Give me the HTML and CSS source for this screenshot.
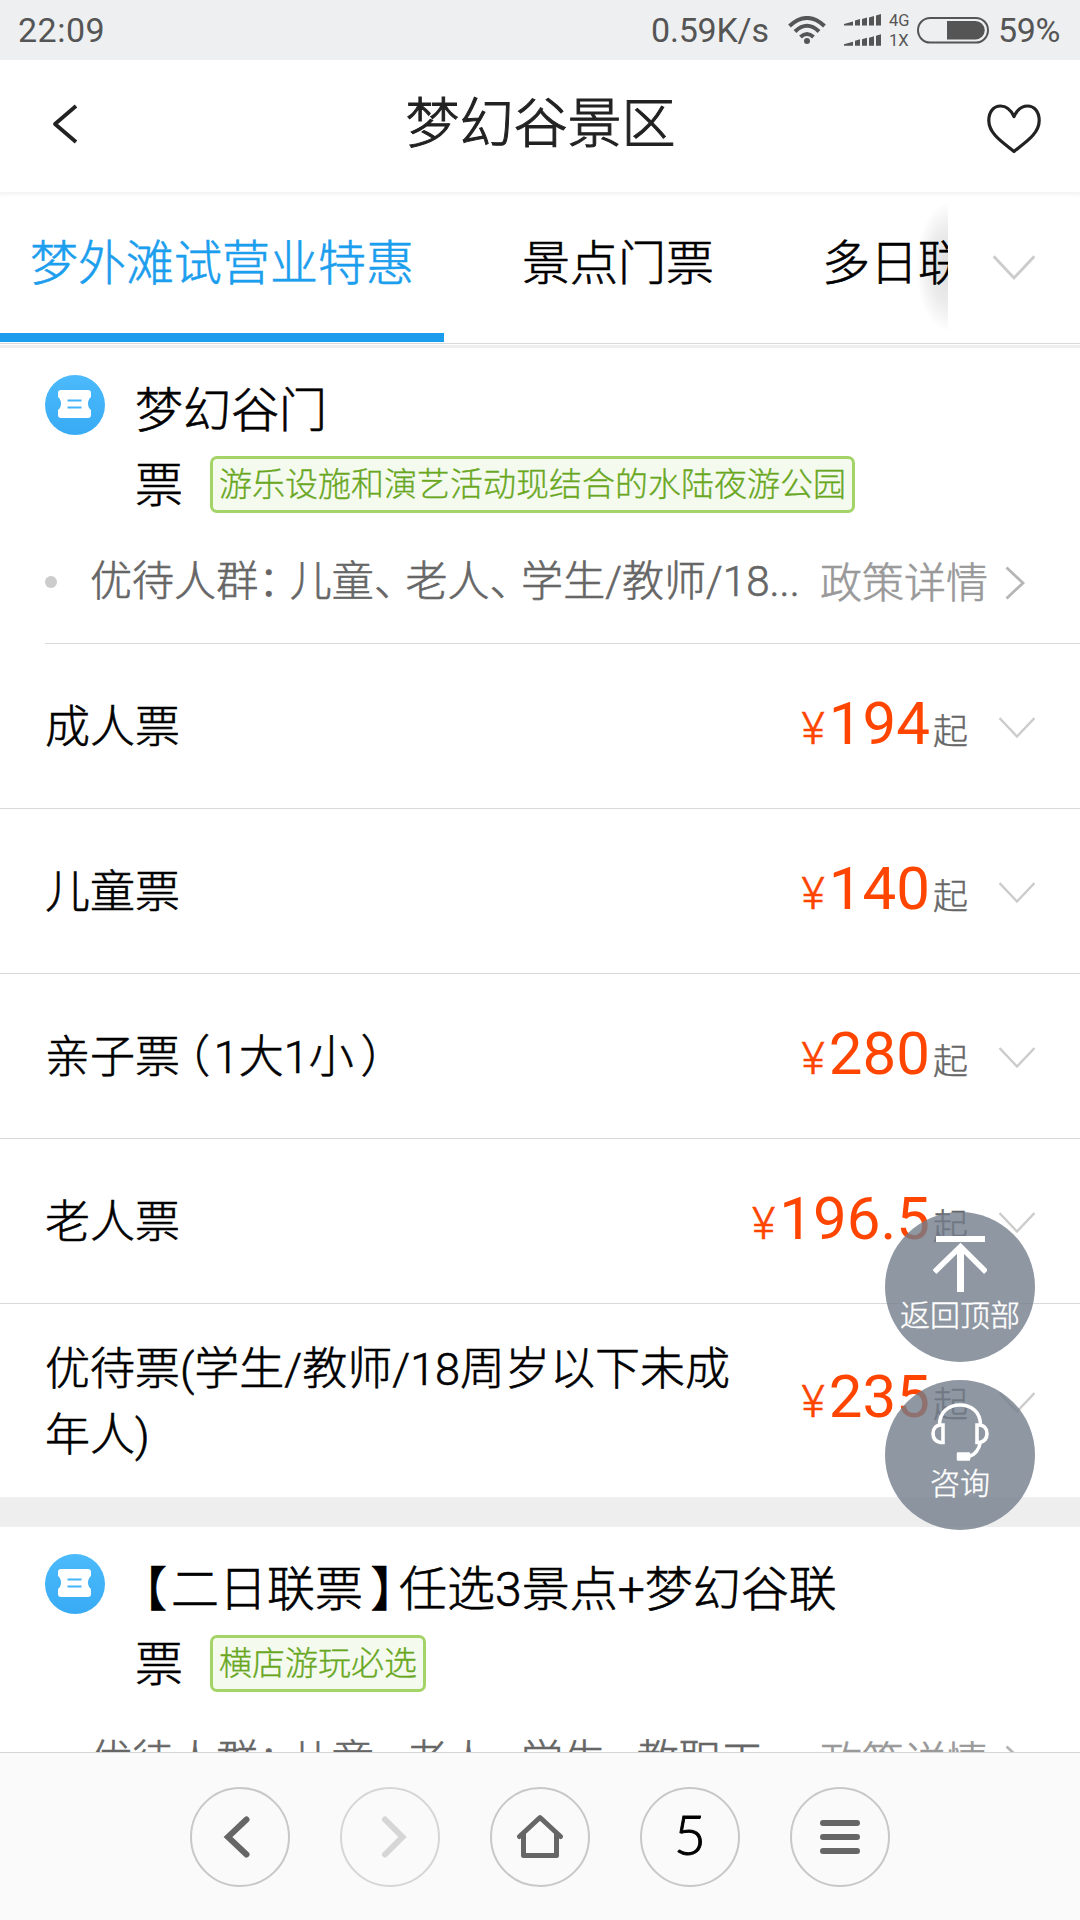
FILE: index.html
```html
<!DOCTYPE html>
<html lang="zh-CN">
<head>
<meta charset="utf-8">
<title>梦幻谷景区</title>
<link rel="stylesheet" href="styles.css">
</head>
<body>
<svg class="defs" width="0" height="0">
  <defs>
    <linearGradient id="sky" x1="0" y1="0" x2="0" y2="1">
      <stop offset="0" stop-color="#4cbafb"/><stop offset="1" stop-color="#38abf5"/>
    </linearGradient>
    <symbol id="ticket" viewBox="0 0 60 60">
      <circle cx="30" cy="30" r="30" fill="url(#sky)"/>
      <path d="M16 15h27q3 0 3 3v4q-3 2.500-3 6.500t3 6.500v5q0 3-3 3H16q-3 0-3-3v-5q3-2.500 3-6.500T13 22v-4q0-3 3-3z" fill="#fff"/>
      <path d="M22.500 25.500h14M22.500 32.500h14" stroke="#45b4f9" stroke-width="2.200"/>
    </symbol>
    <symbol id="down" viewBox="0 0 36 22">
      <path d="M0.500 1L18 19.500L35.500 1" fill="none" stroke="#ccc" stroke-width="2.500"/>
    </symbol>
    <symbol id="more" viewBox="0 0 20 34">
      <path d="M1.500 1.500L18 17L1.500 32.500" fill="none" stroke="#b5b5b5" stroke-width="2.800"/>
    </symbol>
  </defs>
</svg>
<div class="screen">
  <div class="status">
    <span class="time">22:09</span>
    <span class="speed">0.59K/s</span>
    <svg class="wifi" width="38" height="28" viewBox="0 0 38 28" fill="none" stroke="#555" stroke-width="4">
      <path d="M1.500 10Q19-6 36.500 10"/><path d="M7 15.500Q19 4 31 15.500"/><path d="M12.500 21Q19 15 25.500 21"/>
      <circle cx="19" cy="25" r="3" fill="#555" stroke="none"/>
    </svg>
    <svg class="signal" width="38" height="32" viewBox="0 0 38 32" fill="#555">
      <path id="bars" d="M0 11.500V10L9 7.500V11.500zM11 11.500V6.500L16 5V11.500zM18 11.500V5L23 3.500V11.500zM25 11.500V3.500L30 2V11.500zM32 11.500V1.500L37 0V11.500z"/>
      <use href="#bars" y="20.300"/>
    </svg>
    <span class="net"><span>4G</span><span>1X</span></span>
    <svg class="battery" width="72" height="28" viewBox="0 0 72 28">
      <rect x="1" y="2" width="70" height="24.500" rx="12.200" fill="none" stroke="#555" stroke-width="2"/>
      <path d="M30 5H58.500a9.200 9.200 0 0 1 0 18.400H30z" fill="#555"/>
    </svg>
    <span class="percent">59%</span>
  </div>

  <header class="header">
    <svg width="26" height="40" viewBox="0 0 26 40"><path d="M24 2L3 20L24 38" fill="none" stroke="#222" stroke-width="3.800" stroke-linejoin="round"/></svg>
    <h1>梦幻谷景区</h1>
    <svg class="heart" width="54" height="50" viewBox="0 0 54 50"><path d="M27 12.500C23.500 5 18.500 2 13.500 2C6.500 2 1.800 8 1.800 16.500C1.800 30 16 38.500 27 47.500C38 38.500 52.200 30 52.200 16.500C52.200 8 47.500 2 40.500 2C35.500 2 30.500 5 27 12.500z" fill="none" stroke="#222" stroke-width="3.200" stroke-linejoin="round"/></svg>
  </header>

  <nav class="tabs">
    <div class="tab-strip">
      <span class="tab active">梦外滩试营业特惠</span>
      <span class="tab">景点门票</span>
      <span class="tab">多日联票</span>
    </div>
    <div class="tab-more"><svg width="42" height="26"><use href="#down"/></svg></div>
  </nav>

  <main class="content">
    <section class="group">
      <div class="group-head">
        <svg class="ticket" width="60" height="60"><use href="#ticket"/></svg>
        <h2>梦幻谷门<br>票<span class="badge">游乐设施和演艺活动现结合的水陆夜游公园</span></h2>
      </div>
      <div class="policy">
        <i class="dot"></i>
        <span class="who">优待人群<b class="stop">：</b>儿童<b class="stop">、</b>老人<b class="stop">、</b>学生/教师/18...</span>
        <span class="detail">政策详情</span>
        <svg class="more" width="20" height="34"><use href="#more"/></svg>
      </div>
      <ul class="list">
        <li><span class="name">成人票</span><span class="price"><small>¥</small>194<em>起</em></span><svg width="36" height="22"><use href="#down"/></svg></li>
        <li><span class="name">儿童票</span><span class="price"><small>¥</small>140<em>起</em></span><svg width="36" height="22"><use href="#down"/></svg></li>
        <li><span class="name">亲子票<b class="open">（</b>1大1小<b class="close">）</b></span><span class="price"><small>¥</small>280<em>起</em></span><svg width="36" height="22"><use href="#down"/></svg></li>
        <li><span class="name">老人票</span><span class="price"><small>¥</small>196.5<em>起</em></span><svg width="36" height="22"><use href="#down"/></svg></li>
        <li class="tall"><span class="name">优待票(学生/教师/18周岁以下未成<br>年人)</span><span class="price"><small>¥</small>235<em>起</em></span><svg width="36" height="22"><use href="#down"/></svg></li>
      </ul>
    </section>
    <section class="group next">
      <div class="group-head">
        <svg class="ticket" width="60" height="60"><use href="#ticket"/></svg>
        <h2><b class="open">【</b>二日联票<b class="close">】</b>任选3景点+梦幻谷联<br>票<span class="badge">横店游玩必选</span></h2>
      </div>
      <div class="policy">
        <i class="dot"></i>
        <span class="who">优待人群<b class="stop">：</b>儿童<b class="stop">、</b>老人<b class="stop">、</b>学生<b class="stop">、</b>教职工</span>
        <span class="detail">政策详情</span>
        <svg class="more" width="20" height="34"><use href="#more"/></svg>
      </div>
    </section>
  </main>

  <footer class="toolbar">
    <span class="btn"><svg width="40" height="44" viewBox="0 0 40 44"><path d="M26.500 4.500L8 22L26.500 39.500" fill="none" stroke="#666" stroke-width="6" stroke-linecap="round"/></svg></span>
    <span class="btn off"><svg width="40" height="44" viewBox="0 0 40 44"><path d="M15 4.500L32.500 22L15 39.500" fill="none" stroke="#d6d6d6" stroke-width="6" stroke-linecap="round"/></svg></span>
    <span class="btn"><svg width="48" height="46" viewBox="0 0 48 46"><path d="M3.500 22.500L24 3.500L44.500 22.500M7.500 20V41.500H40.500V20" fill="none" stroke="#666" stroke-width="5" stroke-linecap="round" stroke-linejoin="round"/></svg></span>
    <span class="btn num">5</span>
    <span class="btn"><svg width="40" height="36" viewBox="0 0 40 36"><path d="M3 4H37M3 18H37M3 32H37" stroke="#666" stroke-width="6" stroke-linecap="round"/></svg></span>
  </footer>

  <div class="floats">
    <div class="fab">
      <svg width="54" height="58" viewBox="0 0 54 58" fill="none" stroke="#fff"><path d="M3 4H52" stroke-width="6"/><path d="M27.500 57V11" stroke-width="7"/><path d="M1.500 37L27.500 11.500L53 37" stroke-width="5.500"/></svg>
      <span>返回顶部</span>
    </div>
    <div class="fab">
      <svg width="58" height="58" viewBox="0 0 58 58" fill="none" stroke="#fff" stroke-width="3.600"><path d="M8.500 22C8.500 9.500 17 2 29 2S49.500 9.500 49.500 22"/><path d="M12 22V39.500H9.500Q2 38 2 30.500T9.500 22z"/><path d="M46 22V39.500H48.500Q56 38 56 30.500T48.500 22z"/><path d="M49.500 39Q47 51 38 53.500"/><rect x="27" y="50.500" width="11" height="6" fill="#fff" stroke-width="2.500" stroke-linejoin="round"/></svg>
      <span>咨询</span>
    </div>
  </div>
</div>
</body>
</html>
```

FILE: styles.css
```css
* { box-sizing: border-box; margin: 0; padding: 0; }
body { width: 1080px; height: 1920px; overflow: hidden; background: #fff; font-family: Roboto, "Noto Sans CJK SC", sans-serif; color: #000; }
svg { display: block; flex: none; }
.defs { position: absolute; }
h1, h2, b { font-weight: inherit; }
em, i { font-style: normal; }
.screen { position: relative; width: 1080px; height: 1920px; display: flex; flex-direction: column; overflow: hidden; }

.status { flex: none; height: 60px; background: #eeeff1; color: #555; font-size: 34px; line-height: 60px; display: flex; align-items: center; padding: 0 18px; white-space: nowrap; }
.time { margin-right: auto; letter-spacing: 0.500px; }
.speed { width: 120px; letter-spacing: -0.200px; }
.wifi { margin-left: 17px; }
.signal { margin-left: 18px; }
.net { display: flex; flex-direction: column; width: 28px; margin-left: 7px; font-size: 16.500px; line-height: 20px; padding-top: 1px; }
.percent { margin-left: 9px; width: 64px; letter-spacing: -0.300px; }

.header, .tab, .group-head, .policy, .name, .fab { font-weight: 300; -webkit-text-stroke: 0.600px currentColor; }
.header { flex: none; height: 132px; display: flex; align-items: center; justify-content: space-between; padding: 0 39px 4px 52px; }
.header h1 { font-size: 54px; line-height: 66px; color: #222; font-weight: 300; margin: 2px 0 0 16px; -webkit-text-stroke-width: 1px; }
.heart { margin-top: 9px; }

.tabs { flex: none; height: 152px; display: flex; border-bottom: 1px solid #d9d9d9; box-shadow: inset 0 5px 5px -3px #f0f0f0; }
.tab-strip { width: 948px; display: flex; gap: 48px; overflow: hidden; }
.tab { flex: none; padding: 38px 30px 0; height: 150px; font-size: 48px; line-height: 68px; white-space: nowrap; }
.tab.active { color: #1c9eee; border-bottom: 9px solid #1b9dee; }
.tab-more { position: relative; width: 132px; padding: 63px 0 0 45px; }
.tab-more::before { content: ""; position: absolute; right: 100%; top: 10px; width: 32px; height: 130px; background: radial-gradient(ellipse 100% 50% at 100% 50%, rgba(0,0,0,.13), rgba(0,0,0,.08) 55%, transparent); }

.content { flex: 1; min-height: 0; overflow: hidden; padding-top: 1px; }
.group { border-top: 3px solid #eee; }
.group.next { border-top-width: 30px; }
.group-head { display: flex; padding: 25px 0 0 45px; height: 176px; }
.ticket { margin-top: 2px; }
.group-head h2 { margin-left: 30px; font-size: 48px; line-height: 75px; white-space: nowrap; }
.badge { position: relative; top: -5px; display: inline-block; height: 57px; margin: -20px 0 -20px 27px; padding: 0 6px; border: 3px solid #a4d467; border-radius: 7px; background: #f4faee; color: #69a71f; font-size: 33px; line-height: 51px; vertical-align: middle; -webkit-text-stroke-width: 0.300px; }
.policy { display: flex; align-items: center; height: 120px; margin-left: 45px; border-bottom: 1px solid #d9d9d9; font-size: 42px; line-height: 60px; color: #666; white-space: nowrap; }
.dot { width: 12px; height: 12px; border-radius: 50%; background: #ccc; margin-top: -3px; }
.who { width: 730px; margin-left: 33px; margin-top: -3px; letter-spacing: 0.050px; }
.detail { color: #999; width: 168px; margin-top: 1px; }
.more { margin: -2px 0 0 17px; }

/* full-width punctuation set three quarters of an em wide */
.stop, .open, .close { font-feature-settings: "halt"; }
.stop { padding-right: .25em; }
.open { padding: 0 .08em 0 .17em; }
.close { padding: 0 .1em 0 .15em; }

.list { list-style: none; }
.list li { display: flex; align-items: center; height: 165px; padding: 4px 45px 0; border-bottom: 1px solid #d9d9d9; }
.list li.tall { height: 193px; border: 0; }
.name { flex: 1; font-size: 45px; line-height: 66px; white-space: nowrap; }
.price { font-size: 60px; line-height: 70px; color: #ff4500; white-space: nowrap; margin-top: 1px; }
.tall .price { margin-top: -3px; }
.price small { font-size: 45px; font-weight: 300; -webkit-text-stroke: 0.500px currentColor; margin-right: 4px; }
.price em { font-size: 35px; font-weight: 300; -webkit-text-stroke: 0.400px currentColor; color: #666; margin-left: 3px; }
.list svg { margin-left: 31px; }

.toolbar { flex: none; height: 168px; border-top: 1px solid #d5d5d5; background: #fafafa; display: flex; justify-content: center; gap: 50px; padding-top: 34px; }
.btn { width: 100px; height: 100px; border: 2px solid #c8c8c8; border-radius: 50%; display: flex; align-items: center; justify-content: center; }
.btn.off { border-color: #d6d6d6; }
.num { font-family: Lato, sans-serif; font-size: 55px; font-weight: 300; -webkit-text-stroke: 1px #000; line-height: 90px; padding-bottom: 7px; }

.floats { position: absolute; left: 885px; top: 1212px; display: grid; gap: 18px; }
.fab { width: 150px; height: 150px; border-radius: 50%; background: rgba(115,125,139,.8); color: #fff; display: flex; flex-direction: column; align-items: center; padding-top: 23px; font-size: 30px; line-height: 40px; -webkit-text-stroke-width: 0.400px; }
.fab span { margin-top: 3px; }
```
